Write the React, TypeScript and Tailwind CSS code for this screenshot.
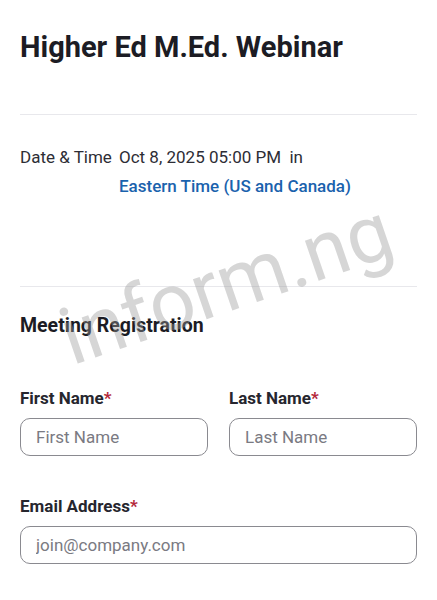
export default function App() {
  return (
    <div className="relative min-h-[600px] w-full overflow-hidden bg-white font-['Roboto',sans-serif] text-[#232333]">
      <div className="px-5">
        <h1 className="pt-[29px] text-[29px] font-bold leading-[36px] text-[#1c1c24]">Higher Ed M.Ed. Webinar</h1>
        <div className="mt-[49px] h-px bg-[#e8e8ec]" />

        <div className="mt-[28px] flex text-[17px] leading-[29px] text-[#2d2d35]">
          <span className="w-[99px] shrink-0">Date &amp; Time</span>
          <div className="flex flex-col">
            <span>Oct 8, 2025 05:00 PM&nbsp; in</span>
            <span className="font-medium text-[#1a62ad]">Eastern Time (US and Canada)</span>
          </div>
        </div>

        <div className="mt-[85px] h-px bg-[#e8e8ec]" />

        <h2 className="mt-[27px] text-[19.5px] font-bold leading-[24px] text-[#1c1c24]">Meeting Registration</h2>

        <div className="mt-[49px] grid grid-cols-2 gap-x-[21px]">
          <div className="flex flex-col">
            <label className="text-[17px] font-bold leading-[22px] text-[#26262e]">
              First Name<span className="text-[#b4283a]">*</span>
            </label>
            <input
              className="mt-[9px] h-[38px] rounded-[10px] border border-[#8a8a90] px-[15px] text-[17px] text-[#2d2d35] placeholder:text-[#7a7a82] outline-none"
              placeholder="First Name"
            />
          </div>
          <div className="flex flex-col">
            <label className="text-[17px] font-bold leading-[22px] text-[#26262e]">
              Last Name<span className="text-[#b4283a]">*</span>
            </label>
            <input
              className="mt-[9px] h-[38px] rounded-[10px] border border-[#8a8a90] px-[15px] text-[17px] text-[#2d2d35] placeholder:text-[#7a7a82] outline-none"
              placeholder="Last Name"
            />
          </div>
        </div>

        <div className="mt-[39px] flex flex-col">
          <label className="text-[17px] font-bold leading-[22px] text-[#26262e]">
            Email Address<span className="text-[#b4283a]">*</span>
          </label>
          <input
            className="mt-[9px] h-[38px] rounded-[10px] border border-[#8a8a90] px-[15px] text-[17px] text-[#2d2d35] placeholder:text-[#7a7a82] outline-none"
            placeholder="join@company.com"
          />
        </div>
      </div>

      <div className="pointer-events-none absolute left-[226px] top-[284px] -translate-x-1/2 -translate-y-1/2 rotate-[-19deg] whitespace-nowrap text-[80px] leading-none text-[#9a9a9a] opacity-40">
        inform.ng
      </div>
    </div>
  );
}
